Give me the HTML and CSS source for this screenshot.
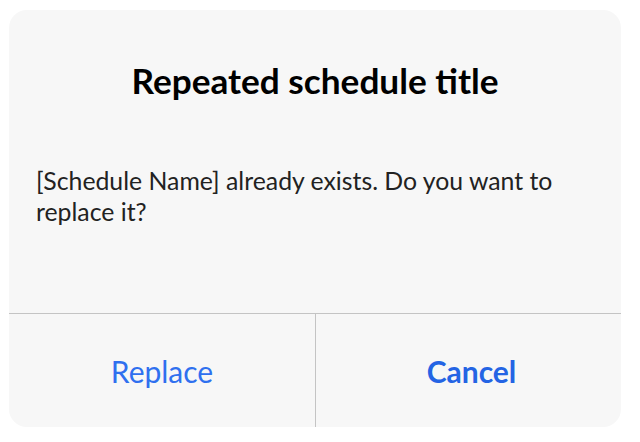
FILE: index.html
```html
<!DOCTYPE html>
<html>
<head>
<meta charset="utf-8">
<link rel="stylesheet" href="styles.css">
</head>
<body>
<div class="dialog">
  <div class="content">
    <h1 class="title">Repeated schedule title</h1>
    <p class="message">[Schedule Name] already exists. Do you want to replace it?</p>
  </div>
  <div class="actions">
    <button class="action">Replace</button>
    <button class="action primary">Cancel</button>
  </div>
</div>
</body>
</html>
```
FILE: styles.css
```css
html, body {
  margin: 0;
  padding: 0;
  background: #ffffff;
  width: 640px;
  height: 442px;
  overflow: hidden;
}
body {
  padding: 10px 19px 15px 9px;
  box-sizing: border-box;
  font-family: Lato, "Open Sans", sans-serif;
}
.dialog {
  width: 612px;
  height: 417px;
  background: #f7f7f7;
  border-radius: 18px;
  display: flex;
  flex-direction: column;
  overflow: hidden;
}
.content {
  flex: 1;
  padding: 0 27px;
}
.title {
  margin: 50px 0 0;
  font-size: 35.2px;
  font-weight: 700;
  line-height: 40px;
  text-align: center;
  color: #000;
}
.message {
  margin: 65px 0 0;
  font-size: 24.8px;
  line-height: 31px;
  color: #222;
}
.actions {
  display: grid;
  grid-template-columns: 1fr 1fr;
  height: 114px;
  box-sizing: border-box;
  border-top: 1px solid #c4c4c4;
}
.action {
  border: none;
  background: transparent;
  font-family: inherit;
  font-size: 30px;
  color: #2f70ef;
  padding: 0;
}
.action + .action {
  border-left: 1px solid #c4c4c4;
  padding-left: 6px;
}
.primary {
  font-weight: 700;
  color: #2464e4;
}
```
